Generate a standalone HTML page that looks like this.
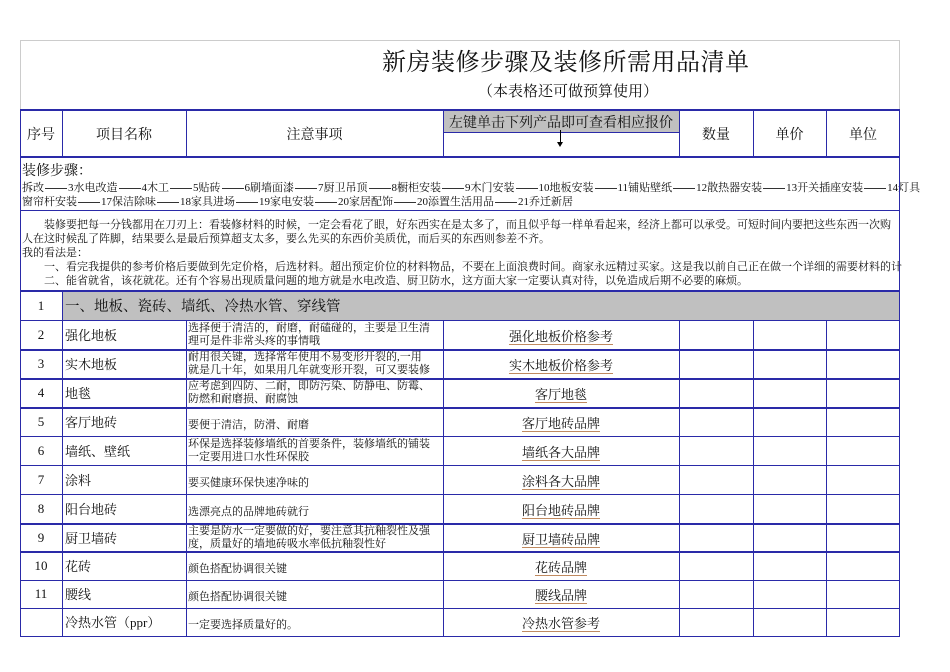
<!DOCTYPE html>
<html><head><meta charset="utf-8"><style>
body{margin:0;width:950px;height:672px;overflow:hidden;background:#fff;font-family:"Liberation Serif","Noto Serif CJK SC",serif;color:#111;position:relative}
.a{position:absolute;white-space:nowrap}
.h{position:absolute;height:0;border-top:1px solid #2a2aa8}
.v{position:absolute;width:0;border-left:1px solid #2a2aa8}
.c{text-align:center}
.lk{text-decoration:underline;text-decoration-color:#c08a60;text-underline-offset:3px}
.d{display:inline-block;width:22px;height:0;border-top:1px solid #333;vertical-align:middle;margin:0 1px;font-size:0}
</style></head><body>
<div class="a" style="left:20px;top:40px;width:880px;height:70px;border:1px solid #ccc;border-bottom:none;box-sizing:border-box"></div>
<div class="a" style="left:382px;top:42px;font-size:24px;letter-spacing:0.5px">新房装修步骤及装修所需用品清单</div>
<div class="a" style="left:478px;top:80px;font-size:15px">（本表格还可做预算使用）</div>

<div class="a" style="left:443px;top:110px;width:236px;height:23px;background:#c0c0c0"></div>
<div class="h" style="left:20px;width:880px;top:109px;border-top-width:2px"></div>
<div class="h" style="left:443px;width:236px;top:132px"></div>
<div class="h" style="left:20px;width:880px;top:156px;border-top-width:2px"></div>
<div class="a c" style="left:20px;width:42px;top:124px;font-size:14px">序号</div>
<div class="a c" style="left:62px;width:124px;top:124px;font-size:14px">项目名称</div>
<div class="a c" style="left:186px;width:257px;top:124px;font-size:14px">注意事项</div>
<div class="a c" style="left:443px;width:236px;top:112px;font-size:14px">左键单击下列产品即可查看相应报价</div>
<div class="a" style="left:560px;top:130px;width:1px;height:14px;background:#000"></div>
<div class="a" style="left:557px;top:142px;width:0;height:0;border-left:3px solid transparent;border-right:3px solid transparent;border-top:5px solid #000"></div>
<div class="a c" style="left:679px;width:74px;top:124px;font-size:14px">数量</div>
<div class="a c" style="left:753px;width:73px;top:124px;font-size:14px">单价</div>
<div class="a c" style="left:826px;width:74px;top:124px;font-size:14px">单位</div>

<div class="a" style="left:22px;top:160px;font-size:14px">装修步骤：</div>
<div class="a" style="left:22px;top:179px;font-size:11px">拆改<span class="d"></span>3水电改造<span class="d"></span>4木工<span class="d"></span>5贴砖<span class="d"></span>6刷墙面漆<span class="d"></span>7厨卫吊顶<span class="d"></span>8橱柜安装<span class="d"></span>9木门安装<span class="d"></span>10地板安装<span class="d"></span>11铺贴壁纸<span class="d"></span>12散热器安装<span class="d"></span>13开关插座安装<span class="d"></span>14灯具</div>
<div class="a" style="left:22px;top:193px;font-size:11px">窗帘杆安装<span class="d"></span>17保洁除味<span class="d"></span>18家具进场<span class="d"></span>19家电安装<span class="d"></span>20家居配饰<span class="d"></span>20添置生活用品<span class="d"></span>21乔迁新居</div>
<div class="h" style="left:20px;width:880px;top:210px"></div>
<div class="a" style="left:22px;top:218px;font-size:11px;line-height:14px">　　装修要把每一分钱都用在刀刃上：看装修材料的时候，一定会看花了眼，好东西实在是太多了，而且似乎每一样单看起来，经济上都可以承受。可短时间内要把这些东西一次购<br>人在这时候乱了阵脚，结果要么是最后预算超支太多，要么先买的东西价美质优，而后买的东西则参差不齐。<br>我的看法是：<br>　　一、看完我提供的参考价格后要做到先定价格，后选材料。超出预定价位的材料物品，不要在上面浪费时间。商家永远精过买家。这是我以前自己正在做一个详细的需要材料的计<br>　　二、能省就省，该花就花。还有个容易出现质量问题的地方就是水电改造、厨卫防水，这方面大家一定要认真对待，以免造成后期不必要的麻烦。</div>
<div class="h" style="left:20px;width:880px;top:290px;border-top-width:2px"></div>

<div class="a" style="left:62px;top:292px;width:838px;height:28px;background:#c0c0c0"></div>
<div class="a c" style="left:20px;width:42px;top:298px;font-size:13px">1</div>
<div class="a" style="left:65px;top:295px;font-size:14.5px">一、地板、瓷砖、墙纸、冷热水管、穿线管</div>

<div class="v" style="left:20px;top:110px;height:526px"></div>
<div class="v" style="left:899px;top:110px;height:526px"></div>
<div class="v" style="left:62px;top:110px;height:47px"></div>
<div class="v" style="left:186px;top:110px;height:47px"></div>
<div class="v" style="left:443px;top:110px;height:47px"></div>
<div class="v" style="left:679px;top:110px;height:47px"></div>
<div class="v" style="left:753px;top:110px;height:47px"></div>
<div class="v" style="left:826px;top:110px;height:47px"></div>
<div class="v" style="left:62px;top:291px;height:345px"></div>
<div class="v" style="left:186px;top:320px;height:316px"></div>
<div class="v" style="left:443px;top:320px;height:316px"></div>
<div class="v" style="left:679px;top:320px;height:316px"></div>
<div class="v" style="left:753px;top:320px;height:316px"></div>
<div class="v" style="left:826px;top:320px;height:316px"></div>

<div class="h" style="left:20px;width:880px;top:320px"></div>
<div class="h" style="left:20px;width:880px;top:349px;border-top-width:2px"></div>
<div class="h" style="left:20px;width:880px;top:378px;border-top-width:2px"></div>
<div class="h" style="left:20px;width:880px;top:407px;border-top-width:2px"></div>
<div class="h" style="left:20px;width:880px;top:436px"></div>
<div class="h" style="left:20px;width:880px;top:465px"></div>
<div class="h" style="left:20px;width:880px;top:494px"></div>
<div class="h" style="left:20px;width:880px;top:523px;border-top-width:2px"></div>
<div class="h" style="left:20px;width:880px;top:551px;border-top-width:2px"></div>
<div class="h" style="left:20px;width:880px;top:580px"></div>
<div class="h" style="left:20px;width:880px;top:608px"></div>
<div class="h" style="left:20px;width:880px;top:636px"></div>

<div class="a c" style="left:20px;width:42px;top:327px;font-size:13px">2</div>
<div class="a" style="left:65px;top:325px;font-size:13px">强化地板</div>
<div class="a" style="left:188px;top:322px;font-size:11px;line-height:13px;width:254px;overflow:hidden">选择便于清洁的，耐磨，耐磕碰的，主要是卫生清<br>理可是件非常头疼的事情哦</div>
<div class="a c lk" style="left:443px;width:236px;top:326px;font-size:13px">强化地板价格参考</div>

<div class="a c" style="left:20px;width:42px;top:356px;font-size:13px">3</div>
<div class="a" style="left:65px;top:354px;font-size:13px">实木地板</div>
<div class="a" style="left:188px;top:351px;font-size:11px;line-height:13px;width:254px;overflow:hidden">耐用很关键，选择常年使用不易变形开裂的,一用<br>就是几十年，如果用几年就变形开裂，可又要装修</div>
<div class="a c lk" style="left:443px;width:236px;top:355px;font-size:13px">实木地板价格参考</div>

<div class="a c" style="left:20px;width:42px;top:385px;font-size:13px">4</div>
<div class="a" style="left:65px;top:383px;font-size:13px">地毯</div>
<div class="a" style="left:188px;top:380px;font-size:11px;line-height:13px;width:254px;overflow:hidden">应考虑到四防、二耐，即防污染、防静电、防霉、<br>防燃和耐磨损、耐腐蚀</div>
<div class="a c lk" style="left:443px;width:236px;top:384px;font-size:13px">客厅地毯</div>

<div class="a c" style="left:20px;width:42px;top:414px;font-size:13px">5</div>
<div class="a" style="left:65px;top:412px;font-size:13px">客厅地砖</div>
<div class="a" style="left:188px;top:416px;font-size:11px">要便于清洁，防滑、耐磨</div>
<div class="a c lk" style="left:443px;width:236px;top:413px;font-size:13px">客厅地砖品牌</div>

<div class="a c" style="left:20px;width:42px;top:443px;font-size:13px">6</div>
<div class="a" style="left:65px;top:441px;font-size:13px">墙纸、壁纸</div>
<div class="a" style="left:188px;top:438px;font-size:11px;line-height:13px;width:254px;overflow:hidden">环保是选择装修墙纸的首要条件，装修墙纸的铺装<br>一定要用进口水性环保胶</div>
<div class="a c lk" style="left:443px;width:236px;top:442px;font-size:13px">墙纸各大品牌</div>

<div class="a c" style="left:20px;width:42px;top:472px;font-size:13px">7</div>
<div class="a" style="left:65px;top:470px;font-size:13px">涂料</div>
<div class="a" style="left:188px;top:474px;font-size:11px">要买健康环保快速净味的</div>
<div class="a c lk" style="left:443px;width:236px;top:471px;font-size:13px">涂料各大品牌</div>

<div class="a c" style="left:20px;width:42px;top:501px;font-size:13px">8</div>
<div class="a" style="left:65px;top:499px;font-size:13px">阳台地砖</div>
<div class="a" style="left:188px;top:503px;font-size:11px">选漂亮点的品牌地砖就行</div>
<div class="a c lk" style="left:443px;width:236px;top:500px;font-size:13px">阳台地砖品牌</div>

<div class="a c" style="left:20px;width:42px;top:530px;font-size:13px">9</div>
<div class="a" style="left:65px;top:528px;font-size:13px">厨卫墙砖</div>
<div class="a" style="left:188px;top:525px;font-size:11px;line-height:13px;width:254px;overflow:hidden">主要是防水一定要做的好，要注意其抗釉裂性及强<br>度，质量好的墙地砖吸水率低抗釉裂性好</div>
<div class="a c lk" style="left:443px;width:236px;top:529px;font-size:13px">厨卫墙砖品牌</div>

<div class="a c" style="left:20px;width:42px;top:558px;font-size:13px">10</div>
<div class="a" style="left:65px;top:556px;font-size:13px">花砖</div>
<div class="a" style="left:188px;top:560px;font-size:11px">颜色搭配协调很关键</div>
<div class="a c lk" style="left:443px;width:236px;top:557px;font-size:13px">花砖品牌</div>

<div class="a c" style="left:20px;width:42px;top:586px;font-size:13px">11</div>
<div class="a" style="left:65px;top:584px;font-size:13px">腰线</div>
<div class="a" style="left:188px;top:588px;font-size:11px">颜色搭配协调很关键</div>
<div class="a c lk" style="left:443px;width:236px;top:585px;font-size:13px">腰线品牌</div>

<div class="a" style="left:65px;top:612px;font-size:13px">冷热水管（ppr）</div>
<div class="a" style="left:188px;top:616px;font-size:11px">一定要选择质量好的。</div>
<div class="a c lk" style="left:443px;width:236px;top:613px;font-size:13px">冷热水管参考</div>
</body></html>
